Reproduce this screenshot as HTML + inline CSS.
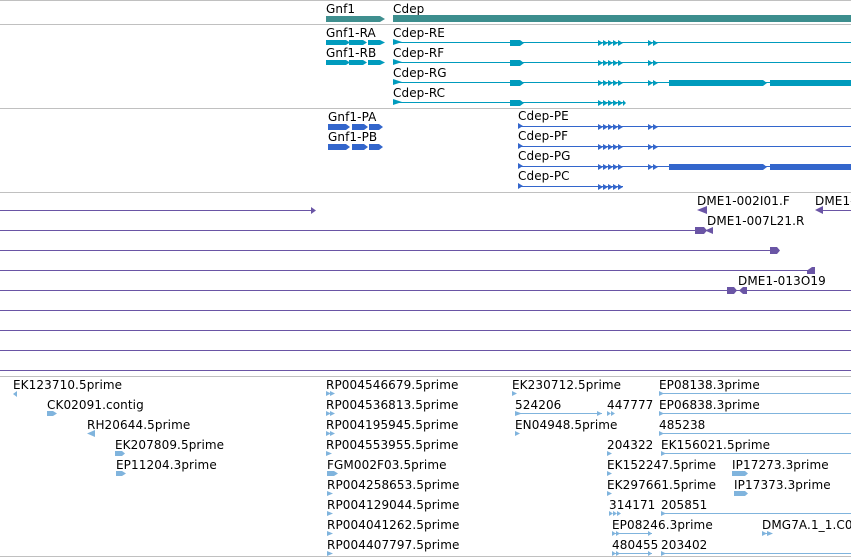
<!DOCTYPE html>
<html><head><meta charset="utf-8"><style>
html,body{margin:0;padding:0;background:#fff;width:851px;height:560px;overflow:hidden}
svg{display:block}
text{font-family:"DejaVu Sans","Liberation Sans",sans-serif;font-size:12px;letter-spacing:0.1px;fill:#000}
</style></head><body>
<svg width="851" height="560" viewBox="0 0 851 560" xmlns="http://www.w3.org/2000/svg">
<defs>
<g id="ta" fill="currentColor">
 <polygon points="393,-4 393,2 402,-1"/>
 <rect x="510" y="-3" width="10" height="6"/><polygon points="520,-3 524,0 520,3"/>
 <polygon points="598,-3 603,0 598,3"/><polygon points="603,-3 608,0 603,3"/><polygon points="608,-3 613,0 608,3"/><polygon points="613,-3 618,0 613,3"/><polygon points="618,-3 623,0 618,3"/>
</g>
<g id="tb" fill="currentColor">
 <polygon points="648,-3 653,0 648,3"/><polygon points="653,-3 658,0 653,3"/><rect x="648" y="-1" width="14" height="1"/>
</g>
<g id="pa" fill="currentColor">
 <polygon points="518,-4 518,2 523,-1"/>
 <polygon points="598,-3 603,0 598,3"/><polygon points="603,-3 608,0 603,3"/><polygon points="608,-3 613,0 608,3"/><polygon points="613,-3 618,0 613,3"/><polygon points="618,-3 623,0 618,3"/>
</g>
<g id="big" fill="currentColor">
 <rect x="669" y="-3" width="94" height="6"/><polygon points="763,-3 767,0 763,3"/>
 <rect x="770" y="-3" width="81" height="6"/>
</g>
</defs>

<g fill="#c0c0c0">
<rect x="0" y="0" width="851" height="1"/>
<rect x="0" y="24" width="851" height="1"/>
<rect x="0" y="108" width="851" height="1"/>
<rect x="0" y="192" width="851" height="1"/>
<rect x="0" y="376" width="851" height="1"/>
<rect x="0" y="556" width="851" height="1"/>
</g>

<text x="326" y="13">Gnf1</text>
<text x="393" y="13">Cdep</text>
<rect x="326" y="16" width="54" height="6" fill="#3f8f8f"/><polygon points="380,16 385,19 380,22" fill="#3f8f8f"/>
<rect x="393" y="15" width="458" height="7" fill="#3c8e8e"/>

<g color="#009bbd">
<text x="326" y="37">Gnf1-RA</text>
<text x="326" y="57">Gnf1-RB</text>
<text x="393" y="37">Cdep-RE</text>
<text x="393" y="57">Cdep-RF</text>
<text x="393" y="77">Cdep-RG</text>
<text x="393" y="97">Cdep-RC</text>
<g fill="#009bbd">
<rect x="326" y="40" width="20" height="5"/><polygon points="346,40 350,42.5 346,45"/><rect x="349" y="40" width="14" height="5"/><polygon points="363,40 367,42.5 363,45"/><rect x="368" y="40" width="12" height="5"/><polygon points="380,40 385,42.5 380,45"/>
<rect x="326" y="60" width="20" height="5"/><polygon points="346,60 350,62.5 346,65"/><rect x="349" y="60" width="14" height="5"/><polygon points="363,60 367,62.5 363,65"/><rect x="368" y="60" width="12" height="5"/><polygon points="380,60 385,62.5 380,65"/>
<rect x="393" y="42" width="458" height="1"/>
<rect x="393" y="62" width="458" height="1"/>
<rect x="393" y="82" width="458" height="1"/>
<rect x="393" y="102" width="232" height="1"/>
</g>
<use href="#ta" y="43"/><use href="#tb" y="43"/>
<use href="#ta" y="63"/><use href="#tb" y="63"/>
<use href="#ta" y="83"/><use href="#tb" y="83"/><use href="#big" y="83"/>
<use href="#ta" y="103"/><polygon points="623,100 626,103 623,106" fill="#009bbd"/>
</g>

<g color="#3366cc">
<text x="328" y="121">Gnf1-PA</text>
<text x="328" y="141">Gnf1-PB</text>
<text x="518" y="120">Cdep-PE</text>
<text x="518" y="140">Cdep-PF</text>
<text x="518" y="160">Cdep-PG</text>
<text x="518" y="180">Cdep-PC</text>
<g fill="#3366cc">
<rect x="328" y="124" width="18" height="6"/><polygon points="346,124 350,127 346,130"/><rect x="352" y="124" width="12" height="6"/><polygon points="364,124 368,127 364,130"/><rect x="369" y="124" width="10" height="6"/><polygon points="379,124 383,127 379,130"/>
<rect x="328" y="144" width="18" height="6"/><polygon points="346,144 350,147 346,150"/><rect x="352" y="144" width="12" height="6"/><polygon points="364,144 368,147 364,150"/><rect x="369" y="144" width="10" height="6"/><polygon points="379,144 383,147 379,150"/>
<rect x="518" y="126" width="333" height="1"/>
<rect x="518" y="146" width="333" height="1"/>
<rect x="518" y="166" width="333" height="1"/>
<rect x="518" y="186" width="105" height="1"/>
</g>
<use href="#pa" y="127"/><use href="#tb" y="127"/>
<use href="#pa" y="147"/><use href="#tb" y="147"/>
<use href="#pa" y="167"/><use href="#tb" y="167"/><use href="#big" y="167"/>
<use href="#pa" y="187"/>
</g>

<g fill="#6a55a5">
<rect x="0" y="210" width="313" height="1"/><polygon points="311,207 316,210.5 311,214"/>
<polygon points="697,210 707,206 707,214"/>
<polygon points="815,210 823,206 823,214"/><rect x="823" y="210" width="28" height="1"/>
<rect x="0" y="230" width="697" height="1"/><polygon points="695,227 704,227 707,230.5 704,234 695,234"/><polygon points="705,230.5 713,227 713,234"/>
<rect x="0" y="250" width="772" height="1"/><polygon points="770,247 777,247 780,250.5 777,254 770,254"/>
<rect x="0" y="270" width="815" height="1"/><polygon points="807,270.5 812,267 815,267 815,274 807,274"/>
<rect x="0" y="290" width="851" height="1"/><polygon points="727,287 734,287 737,290.5 734,294 727,294"/><polygon points="739,290.5 743,287 747,287 747,294 743,294"/>
<rect x="0" y="310" width="851" height="1"/>
<rect x="0" y="330" width="851" height="1"/>
<rect x="0" y="350" width="851" height="1"/>
<rect x="0" y="370" width="851" height="1"/>
</g>
<text x="697" y="205">DME1-002I01.F</text>
<text x="815" y="205">DME1-</text>
<text x="707" y="225">DME1-007L21.R</text>
<text x="738" y="285">DME1-013O19</text>

<text x="13" y="389">EK123710.5prime</text>
<text x="47" y="409">CK02091.contig</text>
<text x="87" y="429">RH20644.5prime</text>
<text x="115" y="449">EK207809.5prime</text>
<text x="116" y="469">EP11204.3prime</text>
<text x="326" y="389">RP004546679.5prime</text>
<text x="326" y="409">RP004536813.5prime</text>
<text x="326" y="429">RP004195945.5prime</text>
<text x="326" y="449">RP004553955.5prime</text>
<text x="327" y="469">FGM002F03.5prime</text>
<text x="327" y="489">RP004258653.5prime</text>
<text x="327" y="509">RP004129044.5prime</text>
<text x="327" y="529">RP004041262.5prime</text>
<text x="327" y="549">RP004407797.5prime</text>
<text x="512" y="389">EK230712.5prime</text>
<text x="515" y="409">524206</text>
<text x="607" y="409">447777</text>
<text x="515" y="429">EN04948.5prime</text>
<text x="607" y="449">204322</text>
<text x="607" y="469">EK152247.5prime</text>
<text x="607" y="489">EK297661.5prime</text>
<text x="609" y="509">314171</text>
<text x="612" y="529">EP08246.3prime</text>
<text x="612" y="549">480455</text>
<text x="659" y="389">EP08138.3prime</text>
<text x="659" y="409">EP06838.3prime</text>
<text x="659" y="429">485238</text>
<text x="661" y="449">EK156021.5prime</text>
<text x="732" y="469">IP17273.3prime</text>
<text x="734" y="489">IP17373.3prime</text>
<text x="661" y="509">205851</text>
<text x="762" y="529">DMG7A.1_1.C0</text>
<text x="661" y="549">203402</text>

<g fill="#80b4dd">
<polygon points="13,394 17,391 17,397"/>
<rect x="47" y="411" width="6" height="5"/><polygon points="53,411 57,413.5 53,416"/>
<polygon points="87,433.5 95,430 95,437"/>
<polygon points="115,451 122,451 125,453.5 122,456 115,456"/>
<polygon points="116,471 122,471 126,473.5 122,476 116,476"/>
<g id="rpm"><polygon points="326,391 331,393.5 326,396"/><polygon points="330,391 335,393.5 330,396"/></g>
<use href="#rpm" y="20"/><use href="#rpm" y="40"/>
<polygon points="326,451 332,453.5 326,456"/>
<polygon points="327,471 334,471 338,473.5 334,476 327,476"/>
<polygon points="327,491 333,493.5 327,496"/>
<polygon points="327,511 333,513.5 327,516"/>
<polygon points="327,531 333,533.5 327,536"/>
<polygon points="327,551 333,553.5 327,556"/>
<polygon points="512,391 517,393.5 512,396"/>
<polygon points="515,411 522,413.5 515,416"/><rect x="515" y="413" width="87" height="1"/><polygon points="597,411 602,413.5 597,416"/>
<polygon points="607,411 611,413.5 607,416"/><polygon points="611,411 615,413.5 611,416"/>
<polygon points="515,431 520,433.5 515,436"/>
<polygon points="607,451 612,453.5 607,456"/>
<polygon points="607,471 612,473.5 607,476"/>
<polygon points="607,491 612,493.5 607,496"/>
<polygon points="609,511 613,513.5 609,516"/><polygon points="613,511 617,513.5 613,516"/><polygon points="617,511 621,513.5 617,516"/>
<polygon points="612,531 616,533.5 612,536"/><polygon points="616,531 620,533.5 616,536"/><rect x="612" y="533" width="40" height="1"/><polygon points="648,531 652,533.5 648,536"/>
<polygon points="612,551 616,553.5 612,556"/><polygon points="616,551 620,553.5 616,556"/><rect x="612" y="553" width="40" height="1"/><polygon points="648,551 652,553.5 648,556"/>
<polygon points="659,391 664,393.5 659,396"/><rect x="659" y="393" width="192" height="1"/>
<polygon points="659,411 664,413.5 659,416"/><rect x="659" y="413" width="192" height="1"/>
<polygon points="659,431 664,433.5 659,436"/><rect x="659" y="433" width="192" height="1"/>
<polygon points="661,451 666,453.5 661,456"/><rect x="661" y="453" width="190" height="1"/>
<polygon points="732,471 745,471 748,473.5 745,476 732,476"/>
<polygon points="734,491 745,491 748,493.5 745,496 734,496"/>
<polygon points="661,511 666,513.5 661,516"/><rect x="661" y="513" width="190" height="1"/>
<polygon points="762,531 767,533.5 762,536"/><polygon points="767,531 773,533.5 767,536"/><rect x="762" y="533" width="10" height="1"/>
<polygon points="661,551 666,553.5 661,556"/><rect x="661" y="553" width="190" height="1"/>
</g>
</svg>
</body></html>
